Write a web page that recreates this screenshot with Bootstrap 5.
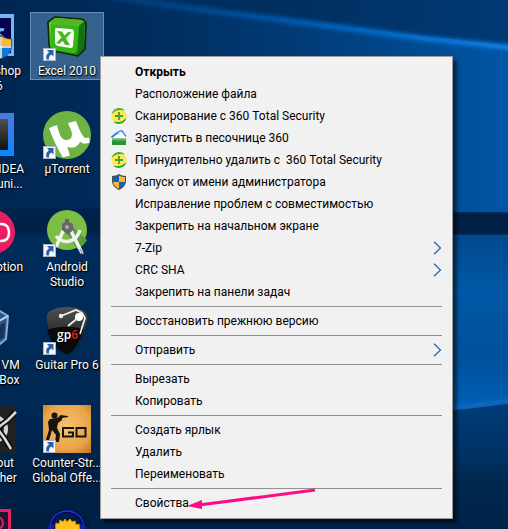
<!DOCTYPE html>
<html lang="ru">
<head>
<meta charset="utf-8">
<meta name="viewport" content="width=device-width, initial-scale=1">
<title>Рабочий стол</title>
<link href="https://cdn.jsdelivr.net/npm/bootstrap@5.3.0/dist/css/bootstrap.min.css" rel="stylesheet">
<style>
  body { font: 12px/15px Roboto, "Open Sans", sans-serif; background: #002450; }
  .wallpaper { z-index: 0; }
  .shortcuts { display: grid; grid-template-columns: 74px 74px; grid-auto-rows: 98px; column-gap: 1px; align-items: start; margin: 0 0 0 -45px; padding-top: 12px; z-index: 1; }
  .shortcut { width: 74px; padding: 0; gap: 3px; border: 1px solid transparent; background: none; color: #fff; line-height: 15px; text-shadow: 1px 1px 2px #000, 0 1px 1px #000; white-space: nowrap; }
  .shortcut.selected { background: rgba(116, 163, 206, .46); border-color: rgba(150, 190, 225, .5); }
  .shortcut svg { width: 48px; height: 48px; overflow: visible; }
  .context { left: 100px; top: 56px; width: 353px; padding: 4px 0; background: #f1f1f1; border: 1px solid #9b9b9b; border-radius: 0; box-shadow: 4px 4px 3px rgba(0, 0, 0, .5); font-size: 12px; color: #000; }
  .context .dropdown-item { height: 22px; padding: 0 10px; color: #000; line-height: 22px; white-space: pre; }
  .context .glyph { width: 16px; height: 16px; margin-right: 8px; flex: none; }
  .context .chevron { width: 9px; height: 14px; margin-left: auto; }
  .context .dropdown-divider { margin: 3px 10px; border-top: 1px solid #919191; opacity: 1; }
  .pointer { left: 84px; bottom: 8px; width: 132px; height: 24px; pointer-events: none; }
</style>
<script src="https://cdn.jsdelivr.net/npm/bootstrap@5.3.0/dist/js/bootstrap.bundle.min.js"></script>
</head>
<body>
<svg width="0" height="0" class="position-absolute" aria-hidden="true">
  <defs>
    <symbol id="link-arrow" viewBox="0 0 13 13">
      <path d="M0 0h13v13H0z" fill="#a9b4c0"/><path d="M1 1h11v11H1z" fill="#f6f7f9"/>
      <path d="M4 2h6.500v6.500L8.300 6.500C6.300 7.700 5.800 9 6 11.500H3.500C2.600 8.300 3.500 6 6 4.300z" fill="#2c5fa6"/>
    </symbol>
    <symbol id="shield" viewBox="0 0 16 16">
      <path d="M8 0C6 1.300 3.500 1.900 1 2v5c0 4 2.500 7 7 9 4.500-2 7-5 7-9V2C12.500 1.900 10 1.300 8 0z" fill="#4b4f52"/>
      <path d="M8 1.400V8H2V3c2-.1 4.300-.6 6-1.600z" fill="#0d62c4"/><path d="M8 1.400V8h6V3c-2-.1-4.300-.6-6-1.600z" fill="#ffb92e"/>
      <path d="M2 8h6v6.800C4.500 13.200 2.300 11 2 8z" fill="#ffb92e"/><path d="M14 8H8v6.800C11.500 13.200 13.700 11 14 8z" fill="#0d62c4"/>
    </symbol>
    <symbol id="bigshield" viewBox="0 0 28 28">
      <path d="M14 1c-4 2.500-8 4-12 4v7c0 7 4.500 12 12 15 7.500-3 12-8 12-15V5c-4 0-8-1.500-12-4z" fill="#3c4a5a"/>
      <path d="M13 3v10H3V6c4 0 7-1.200 10-3z" fill="#0d7bdc"/><path d="M15 3v10h10V6c-4 0-7-1.200-10-3z" fill="#ffb92e"/>
      <path d="M3 15h10v10.500C7 23 3.500 19 3 15z" fill="#ffb92e"/><path d="M25 15H15v10.500C21 23 24.500 19 25 15z" fill="#0d7bdc"/>
      <path d="M14 3v23M3 14h22" stroke="#fff" stroke-width="1.600"/>
    </symbol>
    <symbol id="plus360" viewBox="0 0 16 16">
      <circle cx="8" cy="8" r="7.600" fill="#ffe757"/>
      <path d="M.6 6C1.400 2.400 4.600 .1 8.200 .1c2.500 0 4.500 1 5.800 2.500C11.500 1.900 8.500 1.500 5.800 2.600 3.600 3.500 2 4.700 .6 6z" fill="#4fb03c"/>
      <path d="M15.400 10c-.8 3.600-4 5.900-7.600 5.900-2.500 0-4.500-1-5.800-2.500 2.500.7 5.500 1.100 8.200 0 2.200-.9 3.800-2.100 5.200-3.400z" fill="#32a532"/>
      <path d="M7.100 4h1.800v3.100H12v1.800H8.900V12H7.100V8.900H4V7.100h3.100z" fill="#3fa62b"/>
    </symbol>
    <symbol id="sandbox" viewBox="0 0 16 16">
      <path d="M1.500 8 9 1.500l2.500 0L14.500 6v2z" fill="#fff"/>
      <path d="M.5 7.300 7 2.300" fill="none" stroke="#1583f0" stroke-width="2"/><path d="M7.300 1.600 10.800.8 15 6.500" fill="none" stroke="#2b8df0" stroke-width="1.300"/>
      <path d="M7 4.200l2-1.200" stroke="#8ec5f7" stroke-width="1"/>
      <path d="M1 8.500h14V15H1z" fill="#3aa845"/><path d="M1 8.500h14v1.200H1z" fill="#79c470"/><path d="M1 11.500h14V15H1z" fill="#279232"/>
    </symbol>
    <symbol id="chevron" viewBox="0 0 9 14"><path d="M1 .8 7.500 7 1 13.200" fill="none" stroke="#2463ad" stroke-width="1.200"/></symbol>
    <linearGradient id="bluish" x1="0" x2="0" y1="0" y2="1"><stop stop-color="#5078da"/><stop offset="1" stop-color="#0789ff"/></linearGradient>
    <linearGradient id="coal" x1="0" x2="0" y1="0" y2="1"><stop stop-color="#505050"/><stop offset="1" stop-color="#111"/></linearGradient>
    <linearGradient id="lime" x1="0" x2="1" y1="0" y2="1"><stop stop-color="#6bd42c"/><stop offset=".6" stop-color="#2fae12"/><stop offset="1" stop-color="#126b08"/></linearGradient>
    <radialGradient id="sand" cx=".5" cy=".45" r=".75"><stop stop-color="#f6c370"/><stop offset=".65" stop-color="#e8a447"/><stop offset="1" stop-color="#bd7024"/></radialGradient>
  </defs>
</svg>

<main class="position-relative vh-100 overflow-hidden">
  <svg class="wallpaper position-absolute top-0 start-0 w-100 h-100" viewBox="0 0 508 529" preserveAspectRatio="none" aria-hidden="true">
    <defs>
      <linearGradient id="night" gradientUnits="userSpaceOnUse" x1="0" x2="508" y1="0" y2="0"><stop stop-color="#002753"/><stop offset=".25" stop-color="#002b5a"/><stop offset=".6" stop-color="#003c78"/><stop offset=".85" stop-color="#004c92"/><stop offset="1" stop-color="#0056a6"/></linearGradient>
      <linearGradient id="above"><stop stop-color="#002b5a"/><stop offset=".5" stop-color="#003062"/><stop offset="1" stop-color="#003a74"/></linearGradient>
      <linearGradient id="pane" x1="0" x2="0" y1="0" y2="1"><stop stop-color="#00498c"/><stop offset=".3" stop-color="#0058a6"/><stop offset=".7" stop-color="#00519b"/><stop offset="1" stop-color="#0060b6"/></linearGradient>
      <linearGradient id="floor" x1="0" x2="0" y1="0" y2="1"><stop stop-color="#003c77"/><stop offset=".45" stop-color="#003163"/><stop offset=".6" stop-color="#002850"/><stop offset="1" stop-color="#002248"/></linearGradient>
      <linearGradient id="left" x1="0" x2="0" y1="0" y2="1"><stop stop-color="#002d5c"/><stop offset=".6" stop-color="#002955"/><stop offset="1" stop-color="#001d3e"/></linearGradient>
      <linearGradient id="beam" gradientUnits="userSpaceOnUse" x1="100" x2="508" y1="0" y2="0"><stop stop-color="#00488e" stop-opacity=".6"/><stop offset=".5" stop-color="#0064c0"/><stop offset="1" stop-color="#0d88f4"/></linearGradient>
      <filter id="soft" x="-10%" y="-30%" width="120%" height="160%"><feGaussianBlur stdDeviation="2"/></filter>
    </defs>
    <path d="M0 0h508v529H0z" fill="url(#night)"/>
    <path d="M100-4h408v50L330 25z" fill="url(#above)"/>
    <path d="M110-3 220 12 330 26 420 38 516 48" fill="none" stroke="url(#beam)" stroke-width="5" filter="url(#soft)"/>
    <path d="M0 205h110v324H0z" fill="url(#left)"/>
    <path d="M0 208h110v26H0z" fill="#00224a" filter="url(#soft)"/>
    <path d="M450 236h58v168l-58 7z" fill="url(#pane)"/>
    <path d="M440 213h90v21h-90z" fill="#001f44" stroke="#002a58" stroke-width="2"/>
    <path d="M450 408l60-7" stroke="#0869c1" stroke-width="5" filter="url(#soft)"/>
    <path d="M450 411l58-7v125h-58z" fill="url(#floor)"/>
    <path d="M90 515h370v14H90z" fill="#00224a"/>
  </svg>

  <div class="shortcuts position-relative">
    <button class="shortcut d-flex flex-column align-items-center" type="button">
      <svg viewBox="0 0 48 48" aria-hidden="true"><path d="M1 1h45v42H1z" fill="#79b5f5"/><path d="M4 5h39v35H4z" fill="#03004e"/><path d="M36 17c-5-2-8 4-3 6 3 1.500 3 6-4 5" fill="none" stroke="#79b5f5" stroke-width="3"/><use href="#bigshield" x="20" y="21" width="26" height="26"/></svg>
      <span>Photoshop<br>CS6</span>
    </button>
    <button class="shortcut selected d-flex flex-column align-items-center" type="button">
      <svg viewBox="0 0 48 48" aria-hidden="true">
        <path d="M5 9 12 4 38 6q5 1 5 6l-1 24-7 7-24-5q-5-1-5-7z" fill="url(#lime)" stroke="#082b08" stroke-width="1.600" stroke-linejoin="round"/>
        <path d="M6 10 12 5l25 2q4 1 3 2l-5 4z" fill="#55b625"/><path d="M36 13l6-5-1 27-6 7z" fill="#187012"/>
        <path d="M8 11 31 13q4 1 4 5l-1 19q-1 4-5 3L13 37q-5-1-5-6z" fill="#38b51a"/>
        <path d="M13 15l15 1q3 0 3 4l-1 13q0 2-3 2l-12-2q-3-1-3-4V17q0-2 1-2z" fill="#f8fff4"/>
        <path d="m14 18 5 .5 2.500 4 3.500-3.500 3.500.3-5.500 6 4 7-5-.6-2.500-4-3 3-3.500-.5 5.500-5.700z" fill="#45b822"/>
        <use href="#link-arrow" x="0" y="35" width="13" height="13"/></svg>
      <span>Excel 2010</span>
    </button>

    <button class="shortcut d-flex flex-column align-items-center" type="button">
      <svg viewBox="0 0 48 48" aria-hidden="true"><path d="M2 2h44v43H2z" fill="url(#bluish)"/><path d="M7 8h33v31H7z" fill="url(#coal)"/></svg>
      <span>IntelliJ IDEA<br>Communi...</span>
    </button>
    <button class="shortcut d-flex flex-column align-items-center" type="button">
      <svg viewBox="0 0 48 48" aria-hidden="true"><circle cx="24" cy="24" r="24" fill="#6eb344"/><path d="M6 17l8-3c2 8 4 15 9 15 6 0 7-5 5-10l-3-7 8-2c2 5 5 14 9 17l4-.5.8 5c-5 2-8 1-9.500-1-2 5-8 8-13 5l2.500 9-7 2C15 38 11 31 6 17z" fill="#fff"/><use href="#link-arrow" x="0" y="35" width="13" height="13"/></svg>
      <span>µTorrent</span>
    </button>

    <button class="shortcut d-flex flex-column align-items-center" type="button">
      <svg viewBox="0 0 48 48" aria-hidden="true"><circle cx="25" cy="23" r="22" fill="#e91e63"/><path d="M25 15h8q8 0 8 8.500T33 32h-8" fill="none" stroke="#fff" stroke-width="2.500"/></svg>
      <span>Live Motion</span>
    </button>
    <button class="shortcut d-flex flex-column align-items-center" type="button">
      <svg viewBox="0 0 48 48" aria-hidden="true"><circle cx="24" cy="21" r="20" fill="#7dbe47"/><path d="m28 16 16 15c-3 5-6 7-10 9l-9-14z" fill="#5e9d3b"/>
        <path d="M13 27c6 8 20 8 24-6" fill="none" stroke="#efefef" stroke-width="3.500"/><path d="m21 20-8 18M27 20l12 24" fill="none" stroke="#f2f2f2" stroke-width="3.500"/><path d="m37 40 3 5" stroke="#aaa" stroke-width="2"/>
        <path d="M22 10h4v3l4 2v6l-5 5-6-5v-6l3-2z" fill="#66666c"/><circle cx="24" cy="18" r="2" fill="#aaa"/><use href="#link-arrow" x="0" y="35" width="13" height="13"/></svg>
      <span>Android<br>Studio</span>
    </button>

    <button class="shortcut d-flex flex-column align-items-center" type="button">
      <svg viewBox="0 0 48 48" aria-hidden="true"><path d="M18 9 32 4l8 5-2 23-11 9-12-5z" fill="#305580" stroke="#86abd9" stroke-width="2"/><path d="m18 9 11 6 11-6M29 15l-2 26" fill="none" stroke="#b5d0f0" stroke-width="2"/><path d="m31 19 6-4-1 15-6 4z" fill="#183459"/></svg>
      <span>Oracle VM<br>VirtualBox</span>
    </button>
    <button class="shortcut d-flex flex-column align-items-center" type="button">
      <svg viewBox="0 0 48 48" aria-hidden="true"><path d="M24 0c10 0 18 3 20 8 2 12-11 39-20 39S2 20 4 8C6 3 14 0 24 0z" fill="url(#coal)"/><path d="M4 23q16-6 37-1c-4 12-11 25-17 25S7 35 4 23z" fill="#0b0b0d"/>
        <path d="M18 9 33 3l6 3 3 5-5 16M25 19l11-9" fill="none" stroke="#f2f2f2" stroke-width="1.700"/><circle cx="18" cy="9" r="2.200" fill="#eee"/><circle cx="36" cy="10" r="4" fill="#fff"/>
        <text x="14" y="32" font-family="Open Sans, sans-serif" font-size="12" font-weight="600" fill="#fff">gp<tspan fill="#e02020">6</tspan></text><use href="#link-arrow" x="0" y="35" width="13" height="13"/></svg>
      <span>Guitar Pro 6</span>
    </button>

    <button class="shortcut d-flex flex-column align-items-center" type="button">
      <svg viewBox="0 0 48 48" aria-hidden="true"><path d="M0 0h48v48H0z" fill="#202124"/><circle cx="26" cy="24" r="12" fill="none" stroke="#d5d5d5" stroke-width="4"/><path d="m47 7-7 8-8 6-12 17M29 23l8 11 6 10" fill="none" stroke="#111" stroke-width="6"/><path d="m48 7-8 8-8 6-12 17M29 23l8 11 6 10" fill="none" stroke="#d9d9d9" stroke-width="2.500"/></svg>
      <span>Loadout<br>Launcher</span>
    </button>
    <button class="shortcut d-flex flex-column align-items-center" type="button">
      <svg viewBox="0 0 48 48" aria-hidden="true"><path d="M0 0h48v48H0z" fill="url(#sand)"/>
        <circle cx="11.500" cy="10.500" r="3" fill="#17150f"/><path d="M7 14l7-1 3-2V10l8 1v1l-6 1v2l-4 3-1 5 3 6-1 8h-4l1-7-4-5-2 7-2 6H2l4-13-1-8z" fill="#17150f"/>
        <path d="M31 23H20v8.500h10v-4h-5M33.500 23h9v8.500h-9z" fill="none" stroke="#17150f" stroke-width="2"/><use href="#link-arrow" x="0" y="35" width="13" height="13"/></svg>
      <span>Counter-Str...<br>Global Offe...</span>
    </button>

    <button class="shortcut d-flex flex-column align-items-center" type="button" aria-label="Ярлык">
      <svg viewBox="0 0 48 48" aria-hidden="true"><path d="M1 6h42v41H1z" fill="#e91e63"/><path d="M4 9h36v35H4z" fill="#1c1830"/><circle cx="29" cy="20" r="6" fill="none" stroke="#e91e63" stroke-width="2"/></svg>
    </button>
    <button class="shortcut d-flex flex-column align-items-center" type="button" aria-label="Audacity">
      <svg viewBox="0 0 48 48" aria-hidden="true"><path d="m12 30 1-10 3 1 1-4 3 2 2-3 2 3 3-3 2 3 3-1 1 4 3-1 1 9z" fill="#ffc31c" stroke="#f08a00"/><path d="M7 26C8 2 40 2 41 26" fill="none" stroke="#00006e" stroke-width="3"/><path d="M7 23C10 3 38 3 41 23" fill="none" stroke="#2537d0" stroke-width="1.300"/><path d="M5 24q3-4 6-2v12H5zM43 24q-3-4-6-2v12h6z" fill="#1420a8"/></svg>
    </button>
  </div>

  <div class="context dropdown-menu show" role="menu">
    <button class="dropdown-item d-flex align-items-center fw-bold" type="button"><span class="glyph"></span>Открыть</button>
    <button class="dropdown-item d-flex align-items-center" type="button"><span class="glyph"></span>Расположение файла</button>
    <button class="dropdown-item d-flex align-items-center" type="button"><svg class="glyph"><use href="#plus360"/></svg>Сканирование с 360 Total Security</button>
    <button class="dropdown-item d-flex align-items-center" type="button"><svg class="glyph"><use href="#sandbox"/></svg>Запустить в песочнице 360</button>
    <button class="dropdown-item d-flex align-items-center" type="button"><svg class="glyph"><use href="#plus360"/></svg>Принудительно удалить с  360 Total Security</button>
    <button class="dropdown-item d-flex align-items-center" type="button"><svg class="glyph"><use href="#shield"/></svg>Запуск от имени администратора</button>
    <button class="dropdown-item d-flex align-items-center" type="button"><span class="glyph"></span>Исправление проблем с совместимостью</button>
    <button class="dropdown-item d-flex align-items-center" type="button"><span class="glyph"></span>Закрепить на начальном экране</button>
    <button class="dropdown-item d-flex align-items-center" type="button"><span class="glyph"></span>7-Zip<svg class="chevron"><use href="#chevron"/></svg></button>
    <button class="dropdown-item d-flex align-items-center" type="button"><span class="glyph"></span>CRC SHA<svg class="chevron"><use href="#chevron"/></svg></button>
    <button class="dropdown-item d-flex align-items-center" type="button"><span class="glyph"></span>Закрепить на панели задач</button>
    <hr class="dropdown-divider">
    <button class="dropdown-item d-flex align-items-center" type="button"><span class="glyph"></span>Восстановить прежнюю версию</button>
    <hr class="dropdown-divider">
    <button class="dropdown-item d-flex align-items-center" type="button"><span class="glyph"></span>Отправить<svg class="chevron"><use href="#chevron"/></svg></button>
    <hr class="dropdown-divider">
    <button class="dropdown-item d-flex align-items-center" type="button"><span class="glyph"></span>Вырезать</button>
    <button class="dropdown-item d-flex align-items-center" type="button"><span class="glyph"></span>Копировать</button>
    <hr class="dropdown-divider">
    <button class="dropdown-item d-flex align-items-center" type="button"><span class="glyph"></span>Создать ярлык</button>
    <button class="dropdown-item d-flex align-items-center" type="button"><span class="glyph"></span>Удалить</button>
    <button class="dropdown-item d-flex align-items-center" type="button"><span class="glyph"></span>Переименовать</button>
    <hr class="dropdown-divider">
    <button class="dropdown-item d-flex align-items-center" type="button"><span class="glyph"></span>Свойства</button>
    <svg class="pointer position-absolute" viewBox="0 0 132 24" aria-hidden="true"><path d="M14 19 130 4" stroke="#ff0a86" stroke-width="3"/><path d="m2 20 15-6v9z" fill="#ff0a86"/></svg>
  </div>
</main>
</body>
</html>
